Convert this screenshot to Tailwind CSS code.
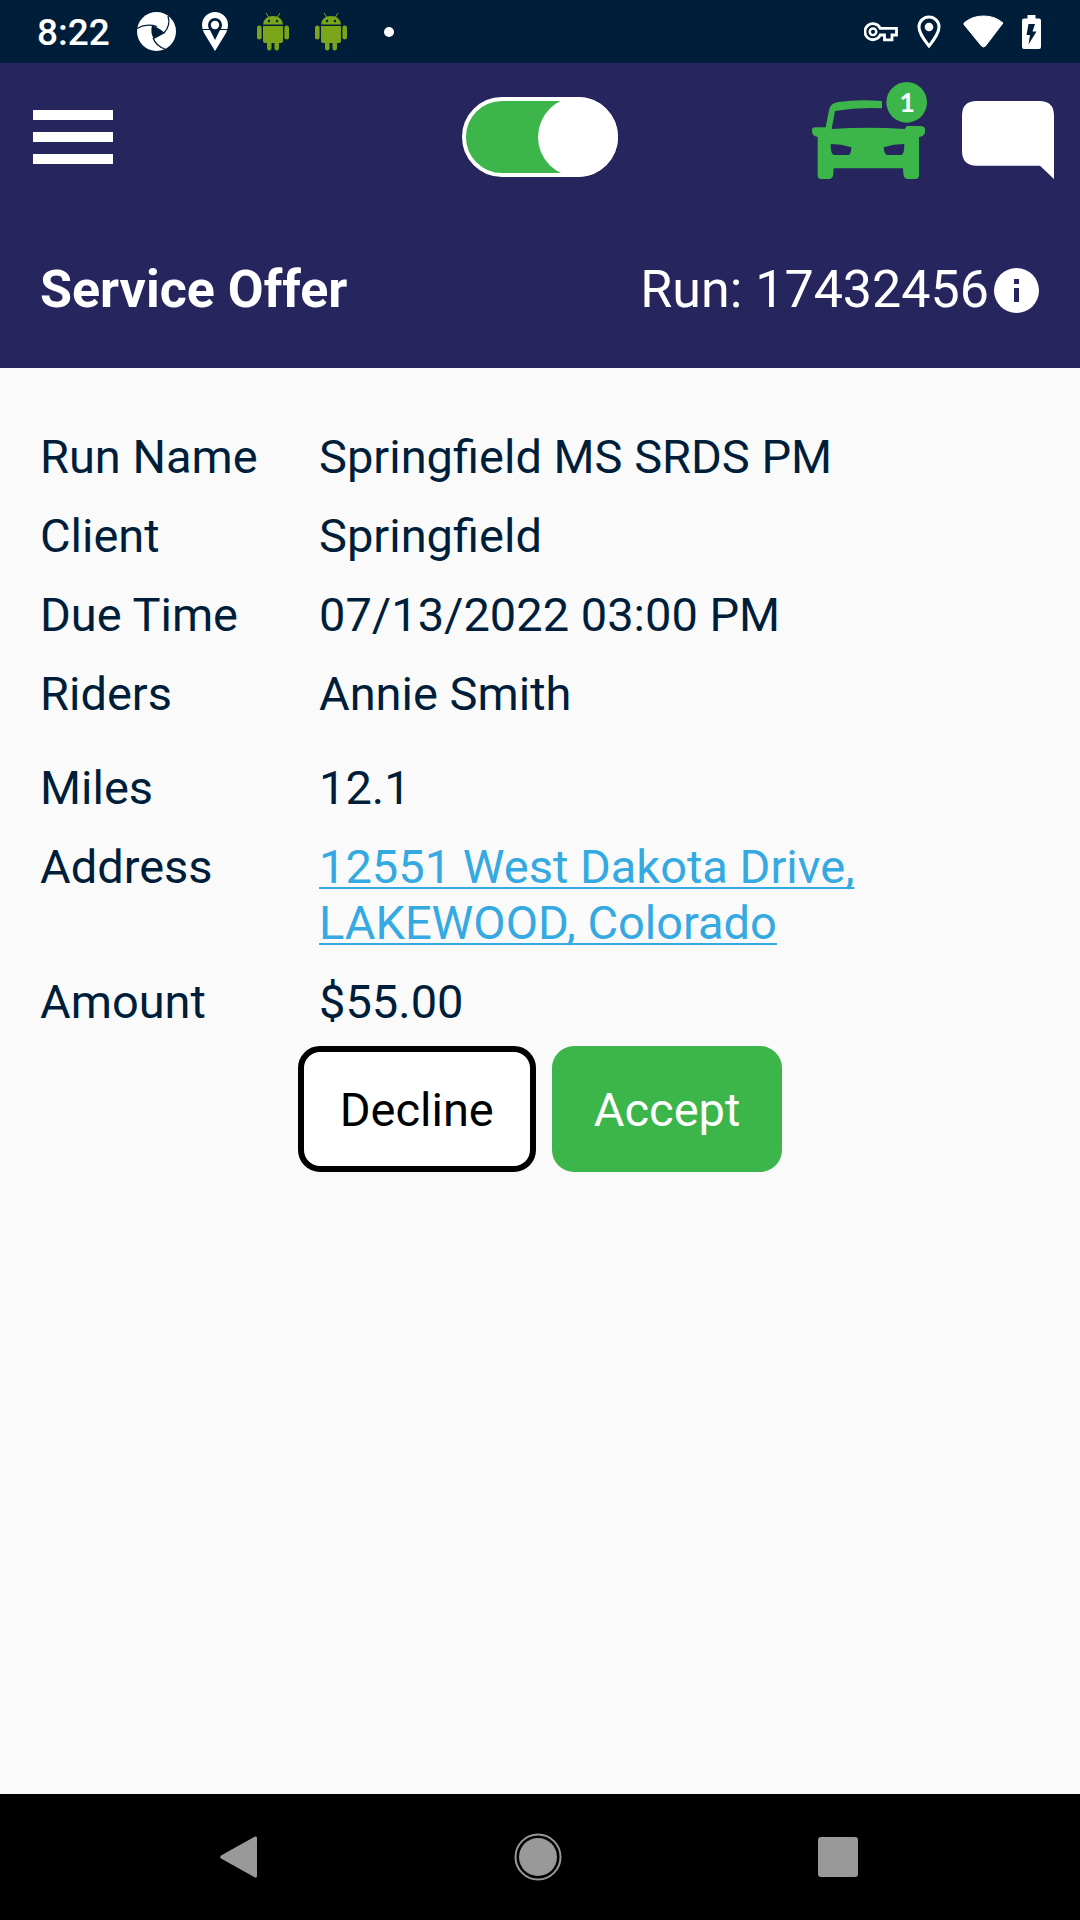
<!DOCTYPE html>
<html lang="en">
<head>
<meta charset="utf-8">
<meta name="viewport" content="width=device-width, initial-scale=1">
<title>Service Offer</title>
<script src="https://cdn.jsdelivr.net/npm/@tailwindcss/browser@4"></script>
</head>
<body class="flex min-h-screen flex-col bg-[#fafafa] font-['Roboto',sans-serif] text-[#001e3a]">

<!-- Status bar -->
<div class="flex h-[63px] items-center justify-between bg-[#001e3a] pl-[37px] pr-[39px] text-white">
  <div class="flex items-center">
    <span class="mr-[27px] pt-[2px] text-[37px] leading-[44px] font-medium">8:22</span>
    <svg class="mr-[26px] h-[39px] w-[39px]" viewBox="0 0 39 39" aria-hidden="true">
      <circle cx="19.500" cy="19.500" r="19.500" fill="#fff"/>
      <path d="M15 13.500Q21 15 28 21L17 27Q13 21 15 13.500Z" fill="#001e3a"/>
      <g fill="none" stroke="#001e3a" stroke-width="1.300">
        <path d="M0 16.500Q9 11 20 14.500"/>
        <path d="M31 4Q34 13 27 21"/>
        <path d="M28 37Q19 34 16 26"/>
      </g>
    </svg>
    <svg class="mr-[29px] h-[39px] w-[26px]" viewBox="0 0 26 39" aria-hidden="true">
      <path d="M13 0a13 13 0 0 1 13 13q0 4-2 8L13 39 2 21q-2-4-2-8A13 13 0 0 1 13 0Z" fill="#fff"/>
      <circle cx="13" cy="13" r="7" fill="#001e3a"/>
      <path d="M0 17.500h26" stroke="#001e3a" stroke-width="1"/>
      <path d="M8 18h10l-5 10Z" fill="#001e3a"/>
      <circle cx="13" cy="13" r="4.200" fill="#fff"/>
    </svg>
    <svg class="mr-[26px] h-[38px] w-[32px]" viewBox="0 0 32 38" fill="#7aa51b" aria-hidden="true">
      <path d="M6 11.500Q7 3 16 3t10 8.500Z"/>
      <path d="m9 0 2.500 4M23 0l-2.500 4" stroke="#7aa51b" stroke-width="1"/>
      <path d="M6 13h20v15q0 2-2 2h-2v5q0 2.500-2.200 2.500T17.500 35v-5h-3v5q0 2.500-2.200 2.500T10 35v-5H8q-2 0-2-2Z"/>
      <rect x="0" y="12.500" width="4.600" height="14" rx="2.300"/>
      <rect x="27.400" y="12.500" width="4.600" height="14" rx="2.300"/>
      <circle cx="12" cy="8" r="1.200" fill="#001e3a"/><circle cx="20" cy="8" r="1.200" fill="#001e3a"/>
    </svg>
    <svg class="mr-[37px] h-[38px] w-[32px]" viewBox="0 0 32 38" fill="#7aa51b" aria-hidden="true">
      <path d="M6 11.500Q7 3 16 3t10 8.500Z"/>
      <path d="m9 0 2.500 4M23 0l-2.500 4" stroke="#7aa51b" stroke-width="1"/>
      <path d="M6 13h20v15q0 2-2 2h-2v5q0 2.500-2.200 2.500T17.500 35v-5h-3v5q0 2.500-2.200 2.500T10 35v-5H8q-2 0-2-2Z"/>
      <rect x="0" y="12.500" width="4.600" height="14" rx="2.300"/>
      <rect x="27.400" y="12.500" width="4.600" height="14" rx="2.300"/>
      <circle cx="12" cy="8" r="1.200" fill="#001e3a"/><circle cx="20" cy="8" r="1.200" fill="#001e3a"/>
    </svg>
    <span class="size-[10px] rounded-full bg-white"></span>
  </div>
  <div class="flex items-center">
    <svg class="mr-[19px] h-[20px] w-[34px]" viewBox="0 0 34 20" fill="none" stroke="#fff" stroke-width="2.800" aria-hidden="true">
      <path d="M16.200 6.400A8 8 0 1 0 16.200 13H20.500V17.800H28V13H32.500V6.400Z"/>
      <circle cx="9" cy="9.800" r="3.300" stroke-width="2.400"/>
    </svg>
    <svg class="mr-[22px] h-[34px] w-[24px]" viewBox="0 0 24 34" aria-hidden="true">
      <path d="M12 2A10 10 0 0 0 2 12C2 19 12 31 12 31S22 19 22 12A10 10 0 0 0 12 2Z" fill="none" stroke="#fff" stroke-width="3"/>
      <circle cx="12" cy="12" r="4.300" fill="#fff"/>
    </svg>
    <svg class="mr-[18px] h-[34px] w-[41px]" viewBox="0 0 41 34" aria-hidden="true">
      <path d="M1 8Q9 1 20.500 1T40 8L22.500 31Q20.500 33 18.500 31L1 9.500Z" fill="#fff" stroke="#fff" stroke-linejoin="round"/>
    </svg>
    <svg class="h-[34px] w-[19px]" viewBox="0 0 19 34" aria-hidden="true">
      <path d="M5.500 0h8v3.500H17a2 2 0 0 1 2 2V32a2 2 0 0 1-2 2H2a2 2 0 0 1-2-2V5.500a2 2 0 0 1 2-2h3.500Z" fill="#fff"/>
      <path d="M6.500 9h6.500l-2.500 7.500h4L6.500 29.500 8 20H4.500Z" fill="#001e3a"/>
    </svg>
  </div>
</div>

<!-- App header -->
<header class="bg-[#26255d] pt-[19px] pb-[47px] text-white">
  <div class="grid h-[110px] grid-cols-[1fr_auto_1fr] items-center">
    <div class="flex pl-[33px]">
      <button type="button" aria-label="Menu" class="flex w-[80px] flex-col gap-[12px]">
        <span class="h-[10px] w-full bg-white"></span>
        <span class="h-[10px] w-full bg-white"></span>
        <span class="h-[10px] w-full bg-white"></span>
      </button>
    </div>
    <label class="relative block h-[80px] w-[156px]">
      <input type="checkbox" checked aria-label="Available" class="peer block h-full w-full appearance-none rounded-full border-4 border-white bg-gray-400 checked:bg-[#3cb54a]">
      <span class="absolute top-0 left-0 size-[80px] rounded-full bg-white peer-checked:right-0 peer-checked:left-auto"></span>
    </label>
    <div class="flex items-center justify-end gap-[35px] pr-[26px]">
      <button type="button" aria-label="Runs" class="relative">
        <svg class="block h-[110px] w-[115px]" viewBox="66 66 345 330" fill="#3cb54a" aria-hidden="true">
          <path fill-rule="evenodd" d="M107 202 117 151Q121 129 145 126 205 118 276 123V145Q205 141 135 153L125 207Q235 199 344 207L350 198H390Q405 199 405 207V217Q403 229 387 231V346Q387 357 376 357H353Q341 357 340 340L339 325H131L130 340Q129 357 118 357H94Q83 357 83 346V231Q66 229 66 214V207Q67 202 76 202ZM122 252Q154 252 184 262 183 285 175 285H132Q122 285 122 252ZM343 252Q311 252 281 262 283 285 292 285H334Q343 285 343 252Z"/>
          <circle cx="350" cy="127" r="61"/>
        </svg>
        <span class="absolute top-0 right-0 w-[40px] text-center font-['Lato',sans-serif] text-[27px] leading-[40px] font-bold">1</span>
      </button>
      <button type="button" aria-label="Messages">
        <svg class="block h-[84px] w-[92px]" viewBox="516 105 276 252" aria-hidden="true">
          <path d="M560 123H748Q792 123 792 167V357L750 317H560Q516 317 516 273V167Q516 123 560 123Z" fill="#fff"/>
        </svg>
      </button>
    </div>
  </div>
  <div class="mt-[67px] flex items-center justify-between pr-[41px] pl-[40px] text-[52px] leading-[62px]">
    <h1 class="font-bold">Service Offer</h1>
    <div class="flex items-center gap-[5px]">
      <span>Run: 17432456</span>
      <button type="button" aria-label="Run information">
        <svg class="block size-[45px]" viewBox="0 0 45 45" aria-hidden="true">
          <circle cx="22.500" cy="22.500" r="22.500" fill="#fff"/>
          <path d="M20 11h5v5h-5ZM20 20h5v14h-5Z" fill="#26255d"/>
        </svg>
      </button>
    </div>
  </div>
</header>

<!-- Offer details -->
<main class="flex-1 pt-[61px] text-[47px] leading-[56px]">
  <dl class="grid grid-cols-[279px_1fr] gap-y-[23px] px-[40px]">
    <dt>Run Name</dt><dd>Springfield MS SRDS PM</dd>
    <dt>Client</dt><dd>Springfield</dd>
    <dt>Due Time</dt><dd>07/13/2022 03:00 PM</dd>
    <dt class="pb-[15px]">Riders</dt><dd>Annie Smith</dd>
    <dt>Miles</dt><dd>12.1</dd>
    <dt>Address</dt><dd><a href="#" class="text-[#35a9e1] underline decoration-2 underline-offset-4 [text-decoration-skip-ink:none]">12551 West Dakota Drive, LAKEWOOD, Colorado</a></dd>
    <dt>Amount</dt><dd>$55.00</dd>
  </dl>
  <div class="mt-[16px] flex justify-center gap-[16px]">
    <button type="button" class="h-[126px] rounded-[22px] border-6 border-black bg-white px-[36px] pt-[2px] text-black">Decline</button>
    <button type="button" class="h-[126px] rounded-[22px] bg-[#3cb54a] px-[42px] pt-[2px] text-white">Accept</button>
  </div>
</main>

<!-- System navigation -->
<nav class="flex h-[126px] items-center justify-between bg-black pr-[222px] pl-[220px]">
  <button type="button" aria-label="Back">
    <svg class="block h-[42px] w-[37px]" viewBox="0 0 37 42" fill="#999" aria-hidden="true"><path d="M35 0.500Q37 0 37 2V40Q37 42 35 41.500L1 22.500Q-0.500 21 1 19.500Z"/></svg>
  </button>
  <button type="button" aria-label="Home">
    <svg class="block size-[48px]" viewBox="0 0 48 48" aria-hidden="true"><circle cx="24" cy="24" r="19" fill="#999"/><circle cx="24" cy="24" r="22.500" fill="none" stroke="#999" stroke-width="2"/></svg>
  </button>
  <button type="button" aria-label="Recent apps" class="size-[40px] rounded-[3px] bg-[#999]"></button>
</nav>
</body>
</html>
